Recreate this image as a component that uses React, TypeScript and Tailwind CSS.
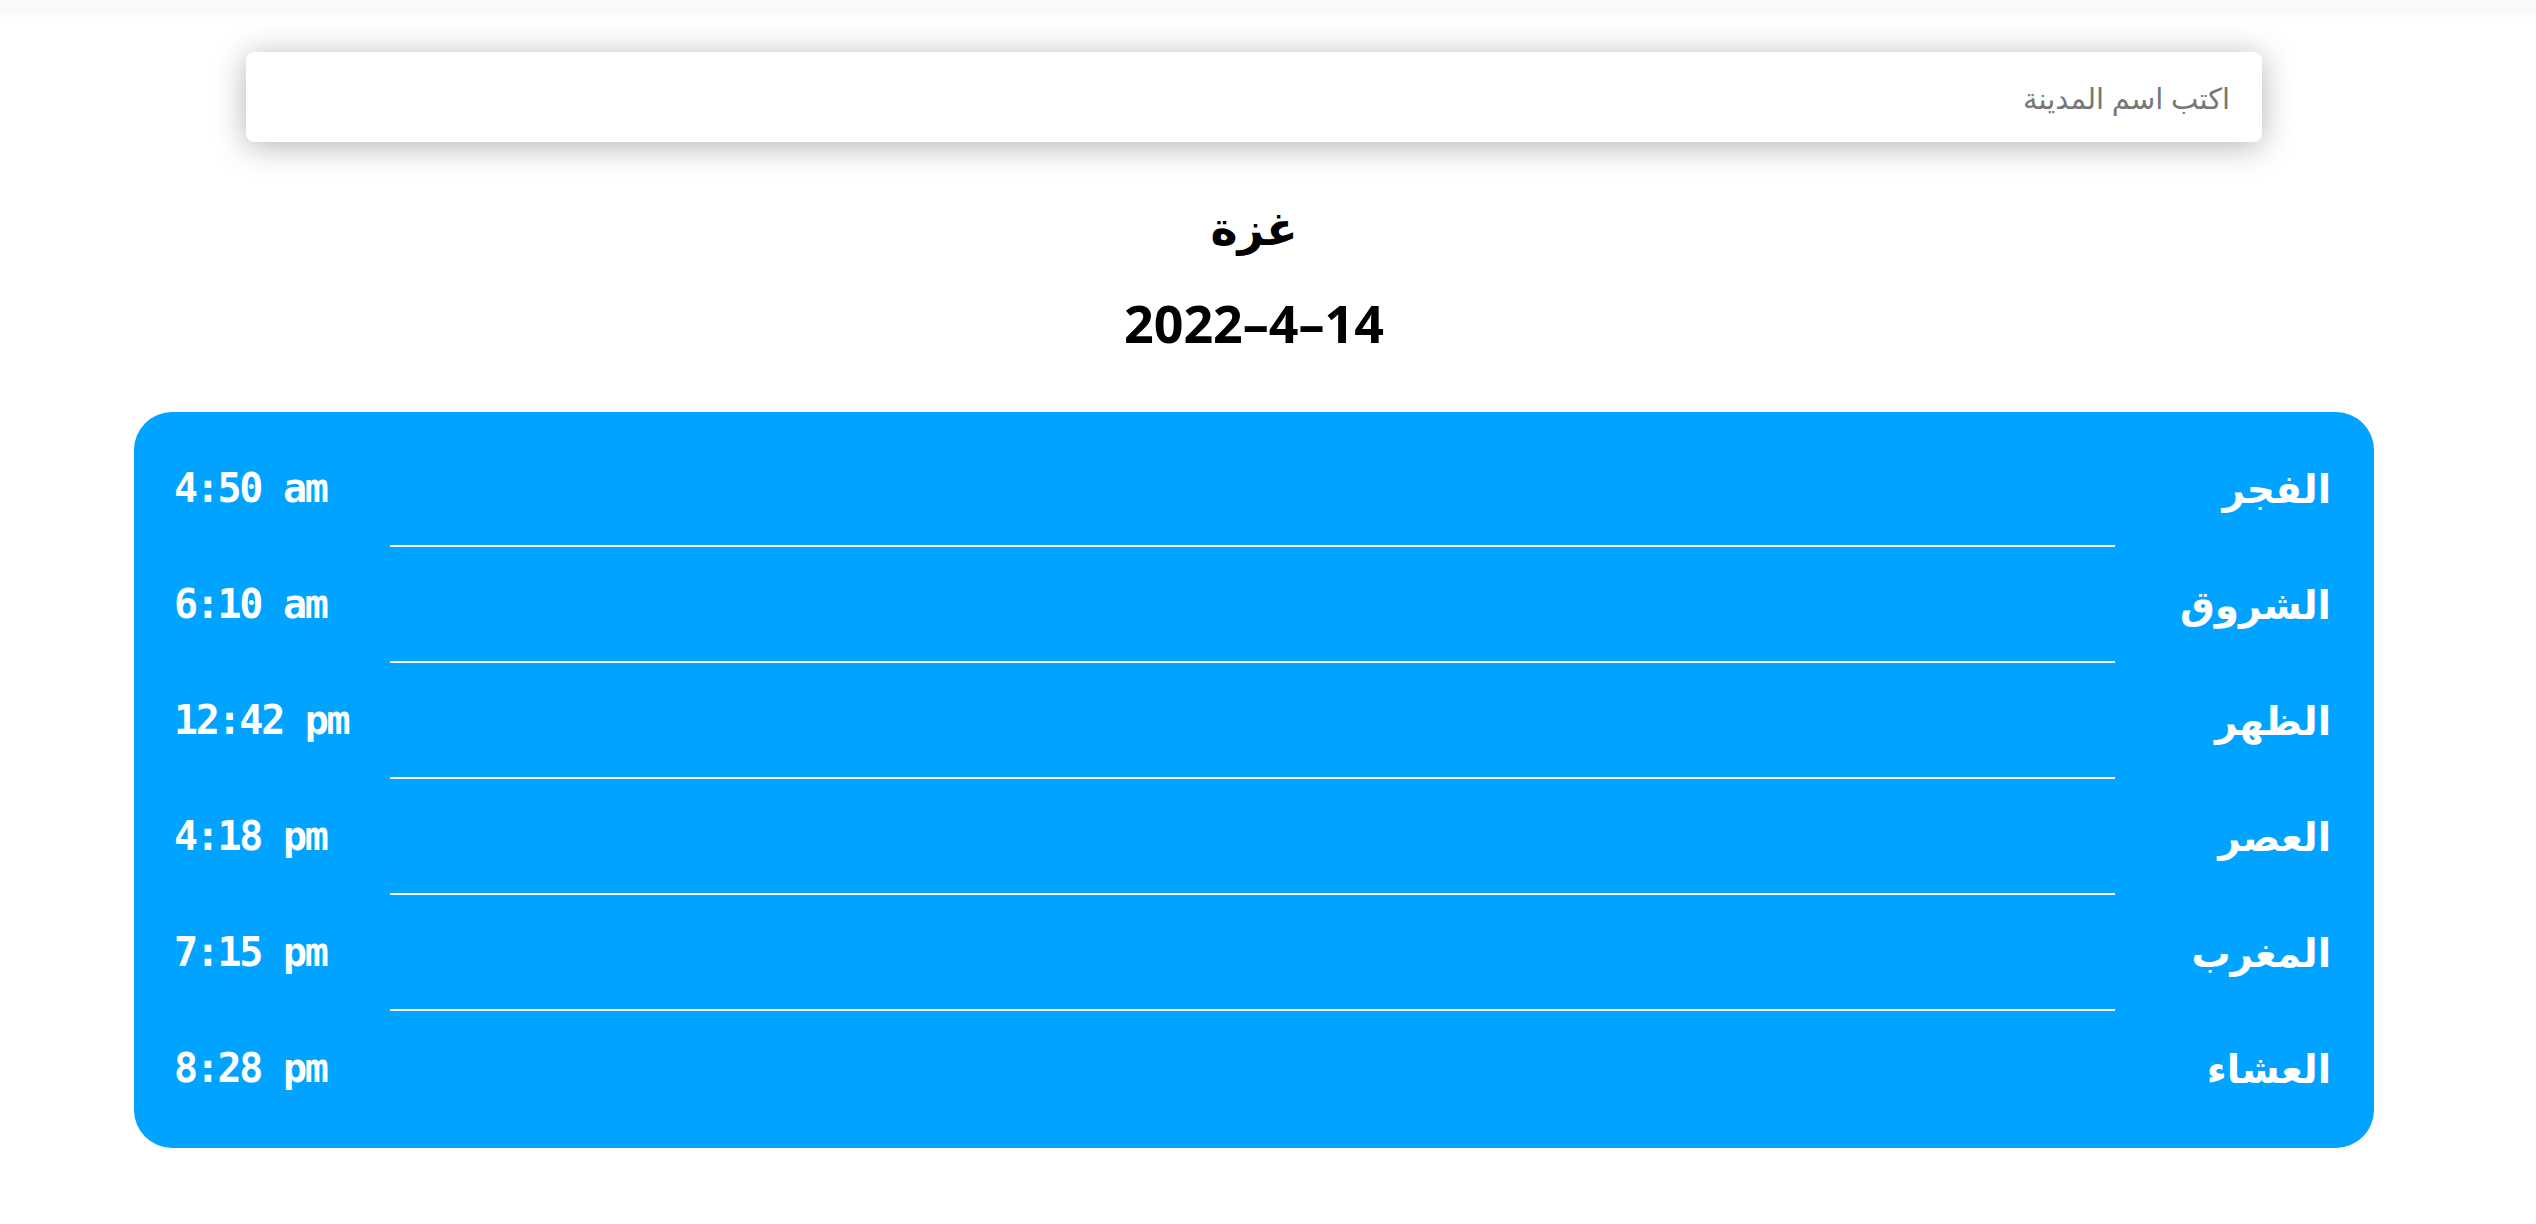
import React from 'react';

const PRAYERS = [
  { name: 'الفجر', time: '4:50 am' },
  { name: 'الشروق', time: '6:10 am' },
  { name: 'الظهر', time: '12:42 pm' },
  { name: 'العصر', time: '4:18 pm' },
  { name: 'المغرب', time: '7:15 pm' },
  { name: 'العشاء', time: '8:28 pm' },
];

const PrayerRow: React.FC<{ name: string; time: string; last: boolean }> = ({ name, time, last }) => (
  <div>
    <div className="flex h-[58px] items-center justify-between">
      <span className="text-[39px] font-semibold text-white">{name}</span>
      <span
        dir="ltr"
        className="font-['DejaVu_Sans_Mono',monospace] text-[40px] font-bold tracking-[-2.3px] text-white"
      >
        {time}
      </span>
    </div>
    {!last && <div className="mx-[216px] my-[28px] h-[2px] bg-white" />}
  </div>
);

export default function App() {
  return (
    <div dir="rtl" className="min-h-screen bg-white font-['Noto_Sans','DejaVu_Sans',sans-serif]">
      <div className="h-[13px] bg-[#f9f9f9] shadow-[0_1px_6px_rgba(0,0,0,0.04)]" />
      <div className="pr-[28px]">
        <div className="mx-auto mt-[39px] w-[2016px]">
          <input
            type="text"
            placeholder="اكتب اسم المدينة"
            className="h-[90px] w-full rounded-[8px] bg-white px-[32px] text-[29px] text-[#333] shadow-[0_4px_32px_rgba(0,0,0,0.3)] outline-none placeholder:text-[#777]"
          />
        </div>
        <h2 className="mt-[40px] text-center text-[46px] font-bold leading-[90px] text-black">غزة</h2>
        <h2 className="mt-[6px] text-center text-[52px] font-bold leading-[90px] text-black">
          <span dir="ltr">2022–4–14</span>
        </h2>
        <div className="mx-auto mt-[44px] w-[2240px] rounded-[38px] bg-[#00a3ff] pb-[51px] pl-[40px] pr-[43px] pt-[47px]">
          {PRAYERS.map((p, i) => (
            <PrayerRow key={p.name} name={p.name} time={p.time} last={i === PRAYERS.length - 1} />
          ))}
        </div>
      </div>
    </div>
  );
}
